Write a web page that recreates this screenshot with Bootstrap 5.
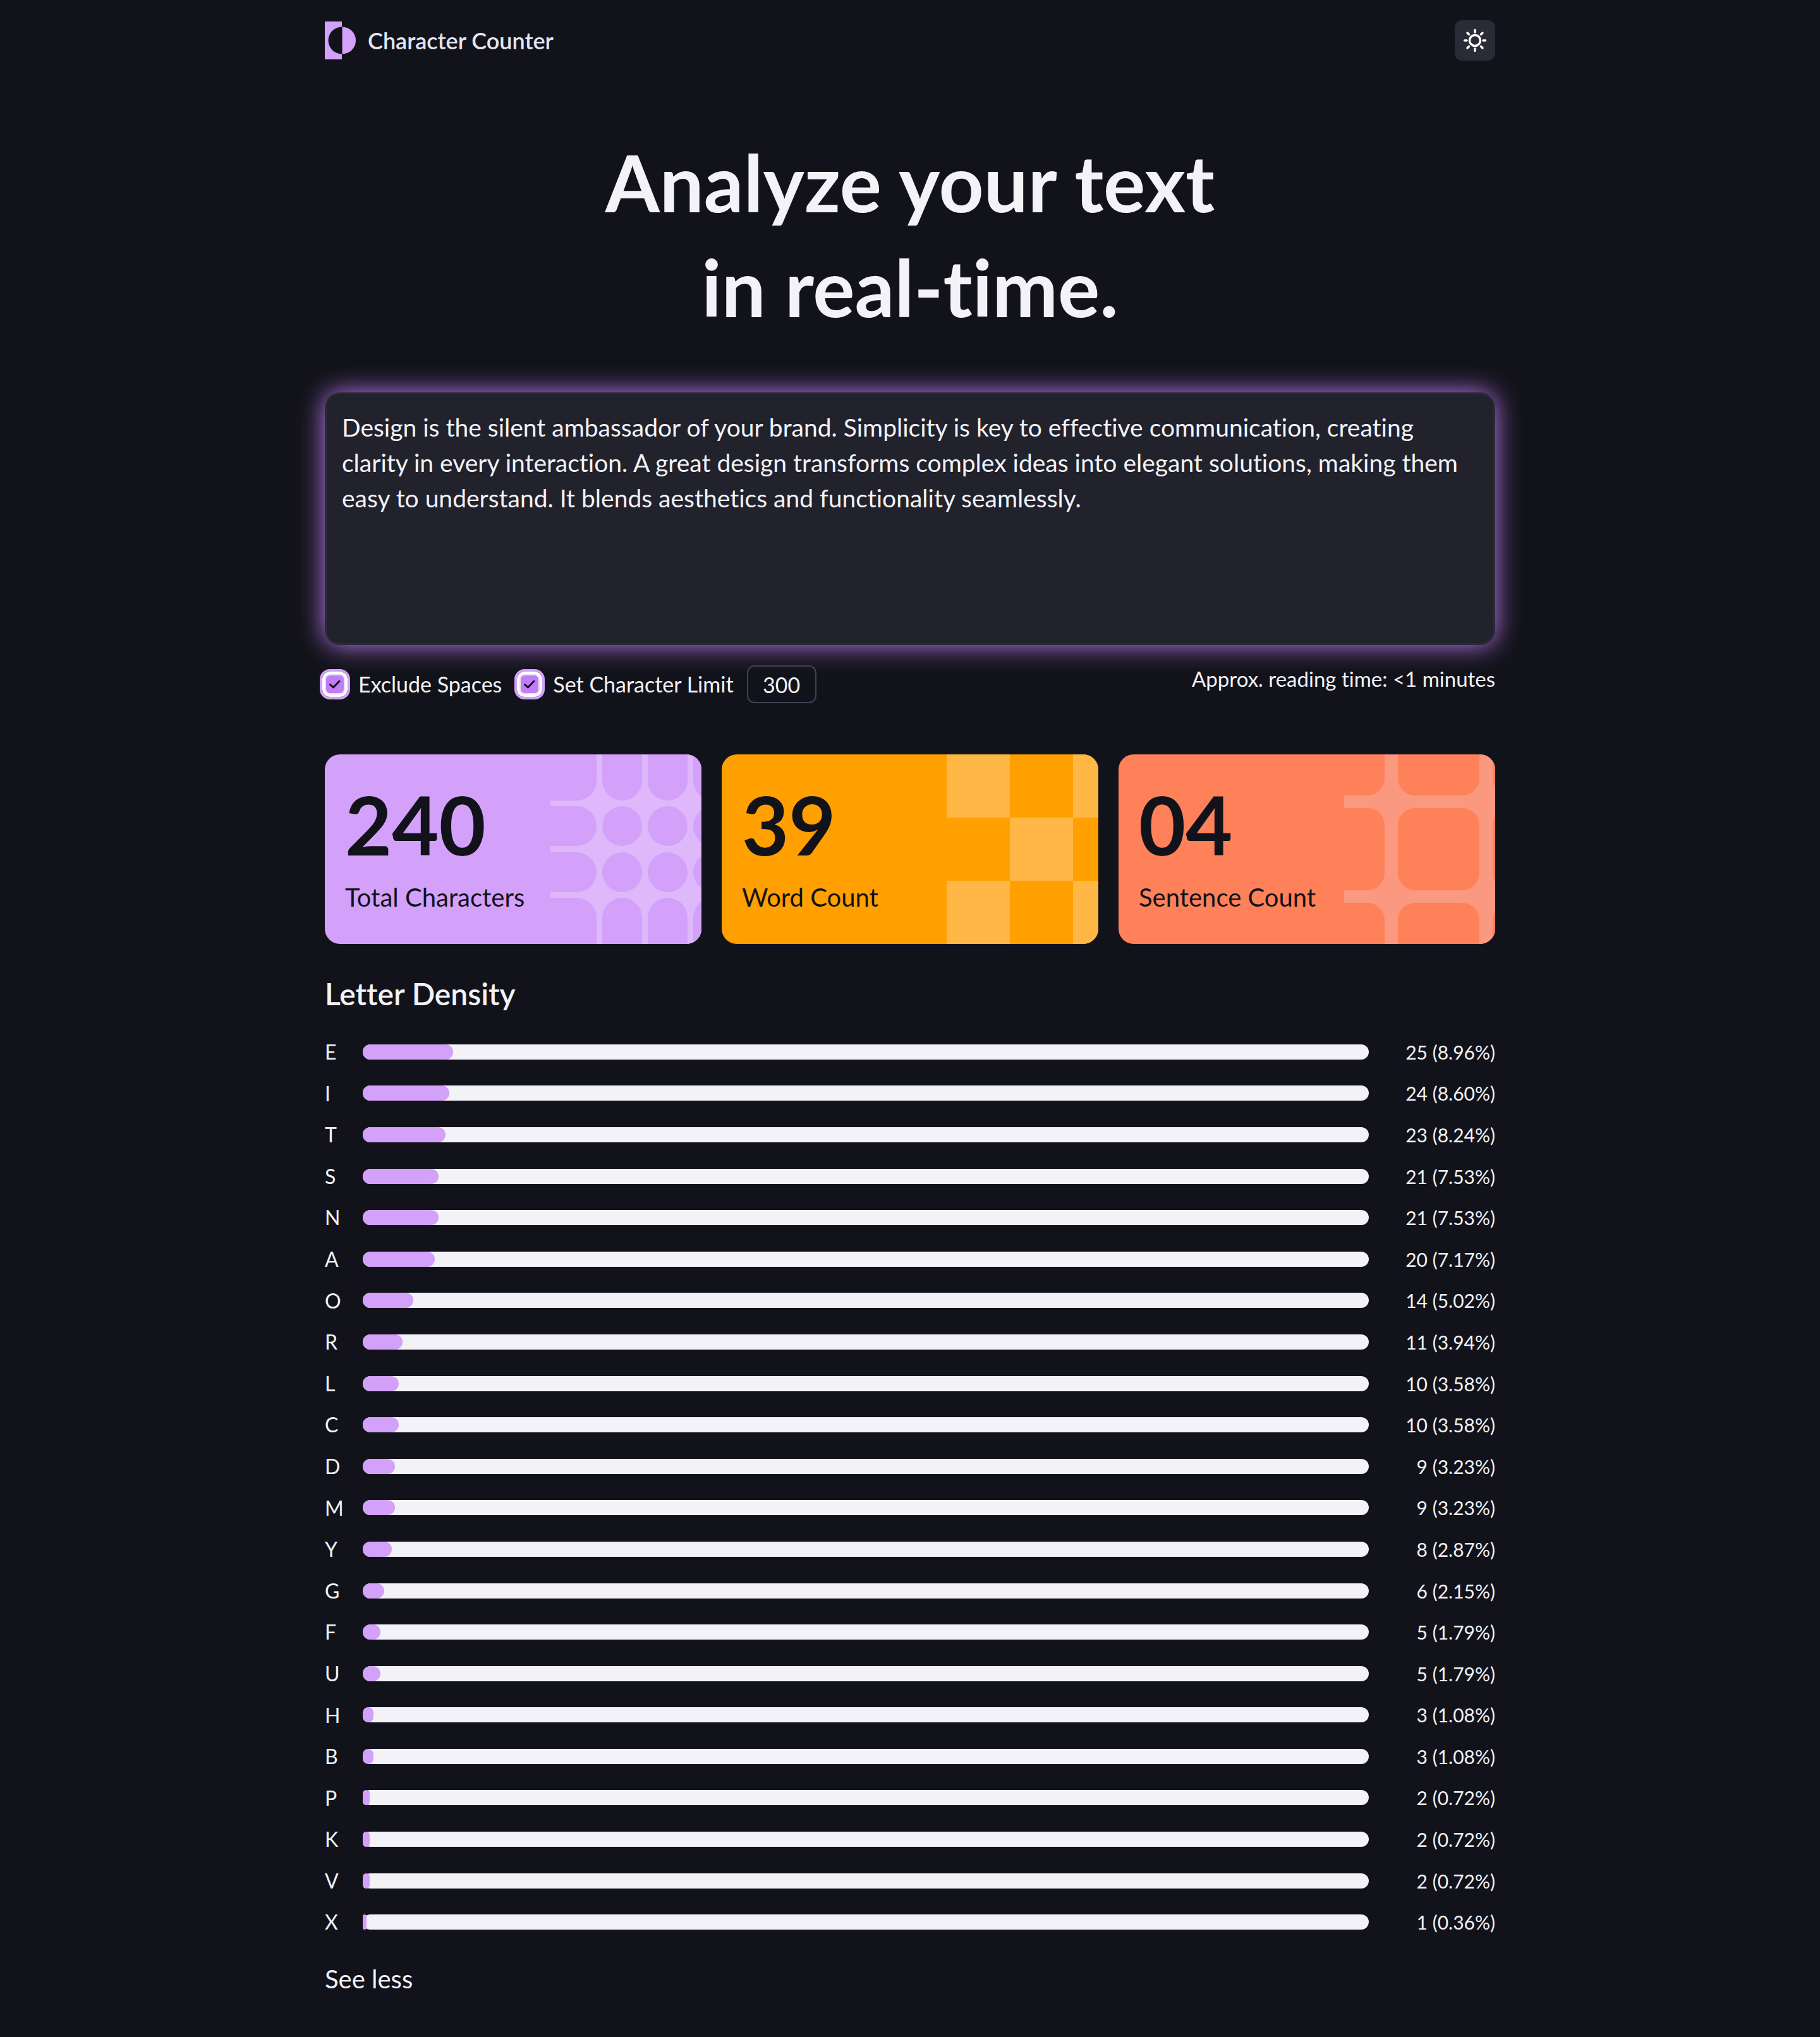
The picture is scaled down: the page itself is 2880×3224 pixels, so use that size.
<!DOCTYPE html>
<html lang="en" data-bs-theme="dark">
<head>
<meta charset="utf-8">
<meta name="viewport" content="width=device-width, initial-scale=1">
<title>Character Counter</title>
<link href="https://cdn.jsdelivr.net/npm/bootstrap@5.3.0/dist/css/bootstrap.min.css" rel="stylesheet">
<style>
  :root {
    --ink: #12131a;
    --paper: #f2f2f7;
    --purple: #d3a0fa;
  }
  body {
    background: var(--ink);
    color: var(--paper);
    font-family: Lato, "Open Sans", sans-serif;
    font-size: 32px;
    line-height: 1.3;
    font-variant-ligatures: none;
  }
  .page-shell { max-width: 1900px; padding: 0 24px; }
  .site-header { min-height: 128px; }
  .brand-link { gap: 19px; color: #e4e4ef; font-size: 36px; font-weight: 600; }
  .brand-link:hover { color: #e4e4ef; }
  .theme-btn { width: 64px; height: 64px; border-radius: 12px; background: #2a2b37; }
  .hero-title { margin: 77px 0 84px; font-size: 124px; line-height: 166px; font-weight: 700; color: var(--paper); }

  .text-entry, .text-entry:focus {
    display: block;
    width: 100%;
    height: 400px;
    padding: 24px;
    resize: none;
    border: 3px solid #2a2b37;
    border-radius: 24px;
    background: #21222c;
    color: var(--paper);
    font-size: 39px;
    line-height: 56px;
    font-variant-ligatures: none;
    box-shadow: 0 0 40px #c27cf8;
  }

  .option-row { margin: 32px 0 81px; font-size: 34px; }
  .tick-sets { gap: 28px; }
  .tick-group { gap: 21px; }
  .tick-box.form-check-input {
    width: 32px;
    height: 32px;
    margin: 0;
    flex: none;
    border: 2px solid #e4e4ef;
    border-radius: 8px;
    outline: 4px solid var(--purple);
    outline-offset: 4px;
    box-shadow: 0 0 0 4px #fff;
    background-color: #c27cf8;
    background-origin: border-box;
    background-size: 32px 32px;
    background-image: url("data:image/svg+xml,%3csvg xmlns='http://www.w3.org/2000/svg' viewBox='0 0 32 32'%3e%3cpath fill='none' stroke='%2312131a' stroke-width='3' stroke-linecap='round' stroke-linejoin='round' d='M8.500 16.500l5 4.500 9.500-10'/%3e%3c/svg%3e");
  }
  .limit-input, .limit-input:focus {
    width: 110px;
    height: 60px;
    padding: 0;
    text-align: center;
    border: 2px solid #404254;
    border-radius: 12px;
    background: transparent;
    color: var(--paper);
    font-size: 34px;
  }
  .reading-time { font-size: 33px; line-height: 42px; }

  .stat-cards { --bs-gutter-x: 32px; --bs-gutter-y: 32px; }
  .stat-tile { position: relative; overflow: hidden; min-height: 300px; padding: 28px 32px 32px; border-radius: 24px; color: var(--ink); }
  .stat-tile svg { position: absolute; top: 0; right: 0; height: 100%; }
  .tile-purple { background: var(--purple); }
  .tile-orange { background: #ff9f00; }
  .tile-coral { background: #fe8159; }
  .stat-figure { position: relative; font-size: 128px; line-height: 166px; font-weight: 700; margin: 0 0 6px; }
  .stat-name { position: relative; font-size: 40px; line-height: 52px; margin: 0; }

  .density-title { margin: 48px 0 40px; font-size: 48px; line-height: 62px; font-weight: 600; color: var(--paper); }
  .density-list { gap: 24px; }
  .density-letter { width: 60px; font-size: 32px; }
  .density-value { width: 200px; font-size: 30px; line-height: 1; }
  .density-row { min-height: 1.3em; }
  .density-track.progress { height: 24px; border-radius: 12px; overflow: visible; background: var(--paper); }
  .density-track .progress-bar { border-radius: 12px; background: var(--purple); }
  .more-btn, .more-btn:hover { margin: 43px 0 64px; color: var(--paper); font-size: 40px; line-height: 52px; }
</style>
</head>
<body>
<div class="container-fluid page-shell">
  <header class="site-header d-flex align-items-center justify-content-between">
    <a class="brand-link d-flex align-items-center text-decoration-none" href="#">
      <svg width="49" height="60" viewBox="0 0 49 60" aria-hidden="true">
        <path fill="#d3a0fa" d="M0 0H27V8.500A21.500 21.500 0 0 0 27 51.500V60H0Z"/>
        <path fill="#d3a0fa" d="M27.500 8.500A21.500 21.500 0 0 1 27.500 51.500Z"/>
      </svg>
      <span>Character Counter</span>
    </a>
    <button type="button" class="btn theme-btn border-0 p-0 d-flex align-items-center justify-content-center" aria-label="Switch theme">
      <svg width="40" height="40" viewBox="-20 -20 40 40" fill="none" stroke="#fff" stroke-width="3.5" stroke-linecap="round" aria-hidden="true">
        <circle r="8.500"/>
        <path d="M0-16.500v3.500M0 13v3.500M-16.500 0h3.500M13 0h3.500M-12-12l2.500 2.500M9.500 9.500l2.500 2.500M-12 12l2.500-2.500M9.500-9.500l2.500-2.500"/>
      </svg>
    </button>
  </header>

  <main>
    <h1 class="hero-title text-center">Analyze your text<br>in real-time.</h1>

    <textarea class="form-control text-entry" aria-label="Text to analyze" spellcheck="false">Design is the silent ambassador of your brand. Simplicity is key to effective communication, creating clarity in every interaction. A great design transforms complex ideas into elegant solutions, making them easy to understand. It blends aesthetics and functionality seamlessly.</textarea>

    <div class="option-row d-flex flex-wrap justify-content-between align-items-start">
      <div class="tick-sets d-flex flex-wrap align-items-center">
        <div class="tick-group d-flex align-items-center">
          <input class="form-check-input tick-box" type="checkbox" id="excludeSpaces" checked>
          <label for="excludeSpaces">Exclude Spaces</label>
        </div>
        <div class="tick-group d-flex align-items-center">
          <input class="form-check-input tick-box" type="checkbox" id="setLimit" checked>
          <label for="setLimit">Set Character Limit</label>
          <input class="form-control limit-input" type="text" inputmode="numeric" value="300" aria-label="Character limit">
        </div>
      </div>
      <p class="reading-time mb-0">Approx. reading time: &lt;1 minutes</p>
    </div>

    <section class="stat-cards row" aria-label="Totals">
      <div class="col-12 col-md-4">
        <div class="stat-tile tile-purple">
          <svg width="239" viewBox="0 0 239 300" preserveAspectRatio="xMaxYMid slice" aria-hidden="true">
            <rect width="239" height="300" fill="#deb8fb"/>
            <g fill="#d3a0fa">
              <rect x="-80" y="-80" width="153" height="153" rx="31.500"/><rect x="82" y="-80" width="63" height="153" rx="31.500"/><rect x="154" y="-80" width="63" height="153" rx="31.500"/><rect x="226" y="-80" width="63" height="153" rx="31.500"/>
              <rect x="-80" y="82" width="153" height="63" rx="31.500"/><circle cx="113.500" cy="113.500" r="31.500"/><circle cx="185.500" cy="113.500" r="31.500"/><circle cx="257.500" cy="113.500" r="31.500"/>
              <rect x="-80" y="155" width="153" height="63" rx="31.500"/><circle cx="113.500" cy="186.500" r="31.500"/><circle cx="185.500" cy="186.500" r="31.500"/><circle cx="257.500" cy="186.500" r="31.500"/>
              <rect x="-80" y="227" width="153" height="153" rx="31.500"/><rect x="82" y="227" width="63" height="153" rx="31.500"/><rect x="154" y="227" width="63" height="153" rx="31.500"/><rect x="226" y="227" width="63" height="153" rx="31.500"/>
            </g>
          </svg>
          <p class="stat-figure">240</p>
          <p class="stat-name">Total Characters</p>
        </div>
      </div>
      <div class="col-12 col-md-4">
        <div class="stat-tile tile-orange">
          <svg width="240" viewBox="0 0 240 300" preserveAspectRatio="xMaxYMid slice" aria-hidden="true">
            <path fill="#ffb846" d="M0 0h100v100H0zM200 0h40v100h-40zM100 100h100v100H100zM0 200h100v100H0zM200 200h40v100h-40z"/>
          </svg>
          <p class="stat-figure">39</p>
          <p class="stat-name">Word Count</p>
        </div>
      </div>
      <div class="col-12 col-md-4">
        <div class="stat-tile tile-coral">
          <svg width="239" viewBox="0 0 239 300" preserveAspectRatio="xMaxYMid slice" aria-hidden="true">
            <rect width="239" height="300" fill="#fa9980"/>
            <g fill="#fe8159">
              <rect x="-90" y="-65" width="154" height="130" rx="27"/><rect x="85" y="-65" width="129" height="130" rx="27"/><rect x="235" y="-65" width="129" height="130" rx="27"/>
              <rect x="-90" y="85" width="154" height="130" rx="27"/><rect x="85" y="85" width="129" height="130" rx="27"/><rect x="235" y="85" width="129" height="130" rx="27"/>
              <rect x="-90" y="235" width="154" height="130" rx="27"/><rect x="85" y="235" width="129" height="130" rx="27"/><rect x="235" y="235" width="129" height="130" rx="27"/>
            </g>
          </svg>
          <p class="stat-figure">04</p>
          <p class="stat-name">Sentence Count</p>
        </div>
      </div>
    </section>

    <section aria-labelledby="densityTitle">
      <h2 class="density-title" id="densityTitle">Letter Density</h2>
      <ul class="density-list list-unstyled d-flex flex-column mb-0" id="densityList"></ul>
      <button type="button" class="btn more-btn border-0 p-0 d-block">See less</button>
    </section>
  </main>
</div>

<script>
  const letters = [
    ["E", 25, "8.96"], ["I", 24, "8.60"], ["T", 23, "8.24"], ["S", 21, "7.53"], ["N", 21, "7.53"],
    ["A", 20, "7.17"], ["O", 14, "5.02"], ["R", 11, "3.94"], ["L", 10, "3.58"], ["C", 10, "3.58"],
    ["D", 9, "3.23"], ["M", 9, "3.23"], ["Y", 8, "2.87"], ["G", 6, "2.15"], ["F", 5, "1.79"],
    ["U", 5, "1.79"], ["H", 3, "1.08"], ["B", 3, "1.08"], ["P", 2, "0.72"], ["K", 2, "0.72"],
    ["V", 2, "0.72"], ["X", 1, "0.36"]
  ];
  document.getElementById("densityList").innerHTML = letters.map(([letter, count, share]) => `
    <li class="density-row d-flex align-items-center">
      <span class="density-letter">${letter}</span>
      <div class="progress density-track flex-grow-1" role="progressbar" aria-label="${letter}" aria-valuenow="${share}" aria-valuemin="0" aria-valuemax="100">
        <div class="progress-bar" style="width: ${share}%"></div>
      </div>
      <span class="density-value text-end">${count} (${share}%)</span>
    </li>`).join("");
</script>
<script src="https://cdn.jsdelivr.net/npm/bootstrap@5.3.0/dist/js/bootstrap.bundle.min.js"></script>
</body>
</html>
